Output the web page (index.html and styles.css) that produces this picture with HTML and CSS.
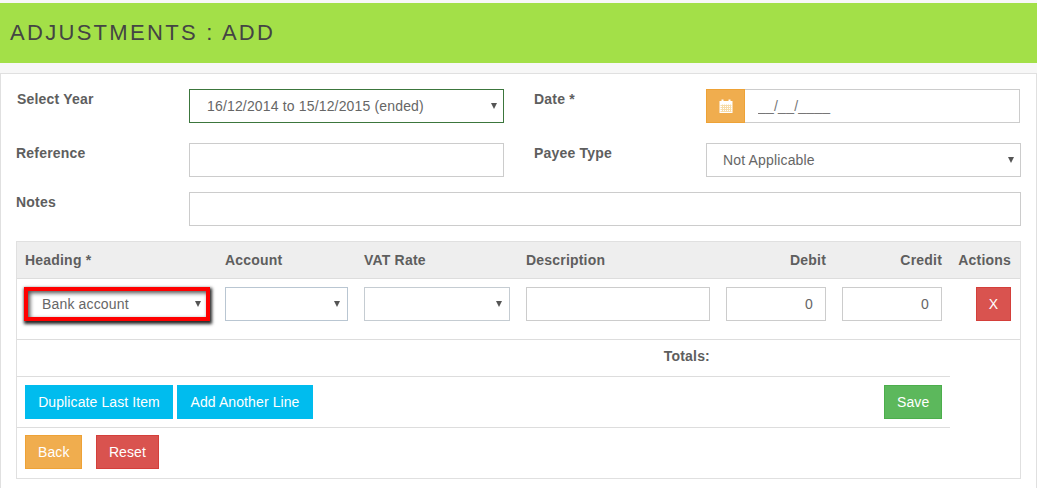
FILE: index.html
```html
<!DOCTYPE html>
<html lang="en">
<head>
<meta charset="utf-8">
<title>Adjustments : Add</title>
<link rel="stylesheet" href="styles.css">
</head>
<body>
<header class="page-title"><h1>ADJUSTMENTS : ADD</h1></header>
<main class="panel">
  <form class="form-grid">
    <label class="lbl lbl-year">Select Year</label>
    <div class="sel"><select class="ctl ctl-ok"><option>16/12/2014 to 15/12/2015 (ended)</option></select></div>
    <label class="lbl lbl-right">Date *</label>
    <div class="date-group">
      <span class="addon">
        <svg width="14" height="14" viewBox="0 0 14 14" aria-hidden="true">
          <rect x="0.5" y="2" width="13" height="12" fill="#fff"/>
          <rect x="2.5" y="0.5" width="2" height="3" fill="#fff"/>
          <rect x="9.5" y="0.5" width="2" height="3" fill="#fff"/>
          <path d="M1.5 6.5h11M1.5 8.5h11M1.5 10.5h11M1.5 12.5h11M3.5 5.5v7.5M5.5 5.5v7.5M7.5 5.5v7.5M9.5 5.5v7.5M11.5 5.5v7.5" stroke="#f7dca8" stroke-width="1" fill="none"/>
        </svg>
      </span>
      <input class="ctl ctl-date" type="text" value="__/__/____">
    </div>

    <label class="lbl">Reference</label>
    <input class="ctl" type="text">
    <label class="lbl lbl-right">Payee Type</label>
    <div class="sel sel-wide"><select class="ctl"><option>Not Applicable</option></select></div>

    <label class="lbl lbl-notes">Notes</label>
    <input class="ctl ctl-notes" type="text">
  </form>

  <div class="lines">
    <table class="lines-table">
      <colgroup>
        <col class="c1"><col class="c2"><col class="c3"><col class="c4"><col class="c5"><col class="c6"><col class="c7">
      </colgroup>
      <thead>
        <tr>
          <th>Heading *</th>
          <th>Account</th>
          <th>VAT Rate</th>
          <th>Description</th>
          <th class="num">Debit</th>
          <th class="num">Credit</th>
          <th class="act">Actions</th>
        </tr>
      </thead>
      <tbody>
        <tr class="item-row">
          <td><div class="sel sel-mark"><select class="ctl"><option>Bank account</option></select></div></td>
          <td><div class="sel"><select class="ctl ctl-blue"><option></option></select></div></td>
          <td><div class="sel"><select class="ctl ctl-blue2"><option></option></select></div></td>
          <td><input class="ctl" type="text"></td>
          <td><input class="ctl ctl-num" type="text" value="0"></td>
          <td><input class="ctl ctl-num" type="text" value="0"></td>
          <td class="act-cell"><button type="button" class="btn btn-red btn-x">X</button></td>
        </tr>
        <tr class="totals-row">
          <td colspan="4" class="totals">Totals:</td>
          <td></td>
          <td></td>
          <td class="blank"></td>
        </tr>
        <tr class="btn-row">
          <td colspan="6">
            <div class="btn-line">
              <button type="button" class="btn btn-info">Duplicate Last Item</button>
              <button type="button" class="btn btn-info btn-add">Add Another Line</button>
              <button type="button" class="btn btn-green">Save</button>
            </div>
          </td>
          <td class="blank"></td>
        </tr>
        <tr class="foot-row">
          <td colspan="7">
            <button type="button" class="btn btn-orange">Back</button>
            <button type="button" class="btn btn-red btn-reset">Reset</button>
          </td>
        </tr>
      </tbody>
    </table>
  </div>
</main>
</body>
</html>
```
FILE: styles.css
```css
* { box-sizing: border-box; }
html, body { height: 100%; }
body {
  margin: 0;
  padding-top: 3px;
  background: #f7f7f7;
  font-family: "Liberation Sans", Arial, sans-serif;
  font-size: 14px;
  color: #5e5e5e;
  overflow: hidden;
}
.page-title {
  height: 60px;
  background: #a3e048;
  padding-left: 10px;
  display: flex;
  align-items: center;
}
.page-title h1 {
  margin: 0;
  font-size: 22px;
  font-weight: 400;
  letter-spacing: 2.3px;
  color: #444;
}
.panel {
  margin-top: 10px;
  height: 420px;
  background: #fff;
  border: 1px solid #e0e0e0;
  padding: 15px 15px 0;
}
.form-grid {
  display: grid;
  grid-template-columns: 173px 315px 202px 315px;
  grid-template-rows: 34px 34px 34px;
  row-gap: 20px;
}
.lbl {
  font-weight: 700;
  line-height: 20px;
  letter-spacing: .2px;
}
.lbl-year { padding-left: 1px; }
.lbl-right { padding-left: 30px; }
.lbl-notes { margin-top: -5px; }
.ctl {
  display: block;
  width: 100%;
  height: 34px;
  border: 1px solid #ccc;
  border-radius: 0;
  background: #fff;
  font: 14px "Liberation Sans", Arial, sans-serif;
  letter-spacing: .16px;
  color: #666;
  padding: 0 12px;
  outline: none;
}
.ctl-ok { border-color: #3c763d; }
.ctl-blue { border-color: #b9c6d2; }
.ctl-blue2 { border-color: #c5ccd2; }
.ctl-notes {
  grid-column: 2 / 5;
  width: 832px;
  margin-top: -5px;
}
.sel { position: relative; width: 100%; }
.sel select {
  appearance: none;
  -webkit-appearance: none;
  padding-left: 16px;
  padding-right: 24px;
}
.sel .ctl-ok { padding-left: 17px; }
.sel::after {
  content: "";
  position: absolute;
  right: 7px;
  top: 14px;
  width: 0;
  height: 0;
  border-left: 3px solid transparent;
  border-right: 3px solid transparent;
  border-top: 6px solid #555;
  pointer-events: none;
}
.lines-table .sel::after { right: 8px; }
.sel-wide { width: 315px; }
.date-group { display: flex; width: 314px; }
.addon {
  flex: 0 0 39px;
  height: 34px;
  background: #f0ad4e;
  border: 1px solid #eea236;
  display: flex;
  align-items: center;
  justify-content: center;
}
.ctl-date {
  flex: 1;
  width: auto;
  border-left: 0;
  color: #777;
  padding-left: 13px;
  letter-spacing: .22px;
}
.lines {
  margin-top: 10px;
  border: 1px solid #e0e0e0;
  height: 238px;
}
.lines-table {
  width: 1003px;
  table-layout: fixed;
  border-collapse: collapse;
}
.c1 { width: 200px; }
.c2 { width: 139px; }
.c3 { width: 162px; }
.c4 { width: 200px; }
.c5 { width: 116px; }
.c6 { width: 116px; }
.c7 { width: 70px; }
.lines-table th {
  height: 36px;
  background: #eee;
  border-bottom: 1px solid #ddd;
  padding: 0 8px;
  text-align: left;
  font-weight: 700;
  letter-spacing: .2px;
  color: #5e5e5e;
}
.lines-table th.num { text-align: right; }
.lines-table th.act { text-align: right; padding-right: 9px; white-space: nowrap; }
.lines-table td { padding: 0 8px; }
.item-row td {
  height: 61px;
  border-bottom: 1px solid #ddd;
  padding-top: 8px;
  padding-bottom: 18px;
  vertical-align: top;
}
.act-cell { text-align: right; padding-right: 9px !important; }
.ctl-num { text-align: right; padding-right: 12px; }
.sel-mark select {
  border: 4px solid #f00;
  margin: 0 0 0 -1px;
  width: 186px;
  padding-left: 14px;
  box-shadow: 1px 2px 3px 1px rgba(0, 0, 0, .85), inset 2px 2px 4px rgba(0, 0, 0, .7);
}
.totals-row td { height: 37px; border-bottom: 1px solid #ddd; }
.totals {
  text-align: right;
  font-weight: 700;
  letter-spacing: .2px;
  padding-bottom: 3px !important;
}
.totals-row td.blank, .btn-row td.blank { border-bottom: 0; }
.btn-row td {
  height: 51px;
  border-bottom: 1px solid #ddd;
}
.btn-line { display: flex; align-items: center; gap: 4px; }
.btn {
  height: 34px;
  border: 1px solid transparent;
  border-radius: 0;
  font: 14px "Liberation Sans", Arial, sans-serif;
  letter-spacing: .1px;
  color: #fff;
  padding: 0 12px;
}
.btn-info { background: #00bcee; border-color: #00bcee; width: 148px; }
.btn-add { width: 136px; }
.btn-green { background: #5cb85c; border-color: #4cae4c; width: 58px; margin-left: auto; }
.btn-red { background: #d9534f; border-color: #d43f3a; }
.btn-x { width: 35px; padding: 0; }
.btn-orange { background: #f0ad4e; border-color: #eea236; width: 57px; }
.btn-reset { width: 63px; margin-left: 10px; }
.foot-row td { height: 50px; padding-top: 0; }
```
